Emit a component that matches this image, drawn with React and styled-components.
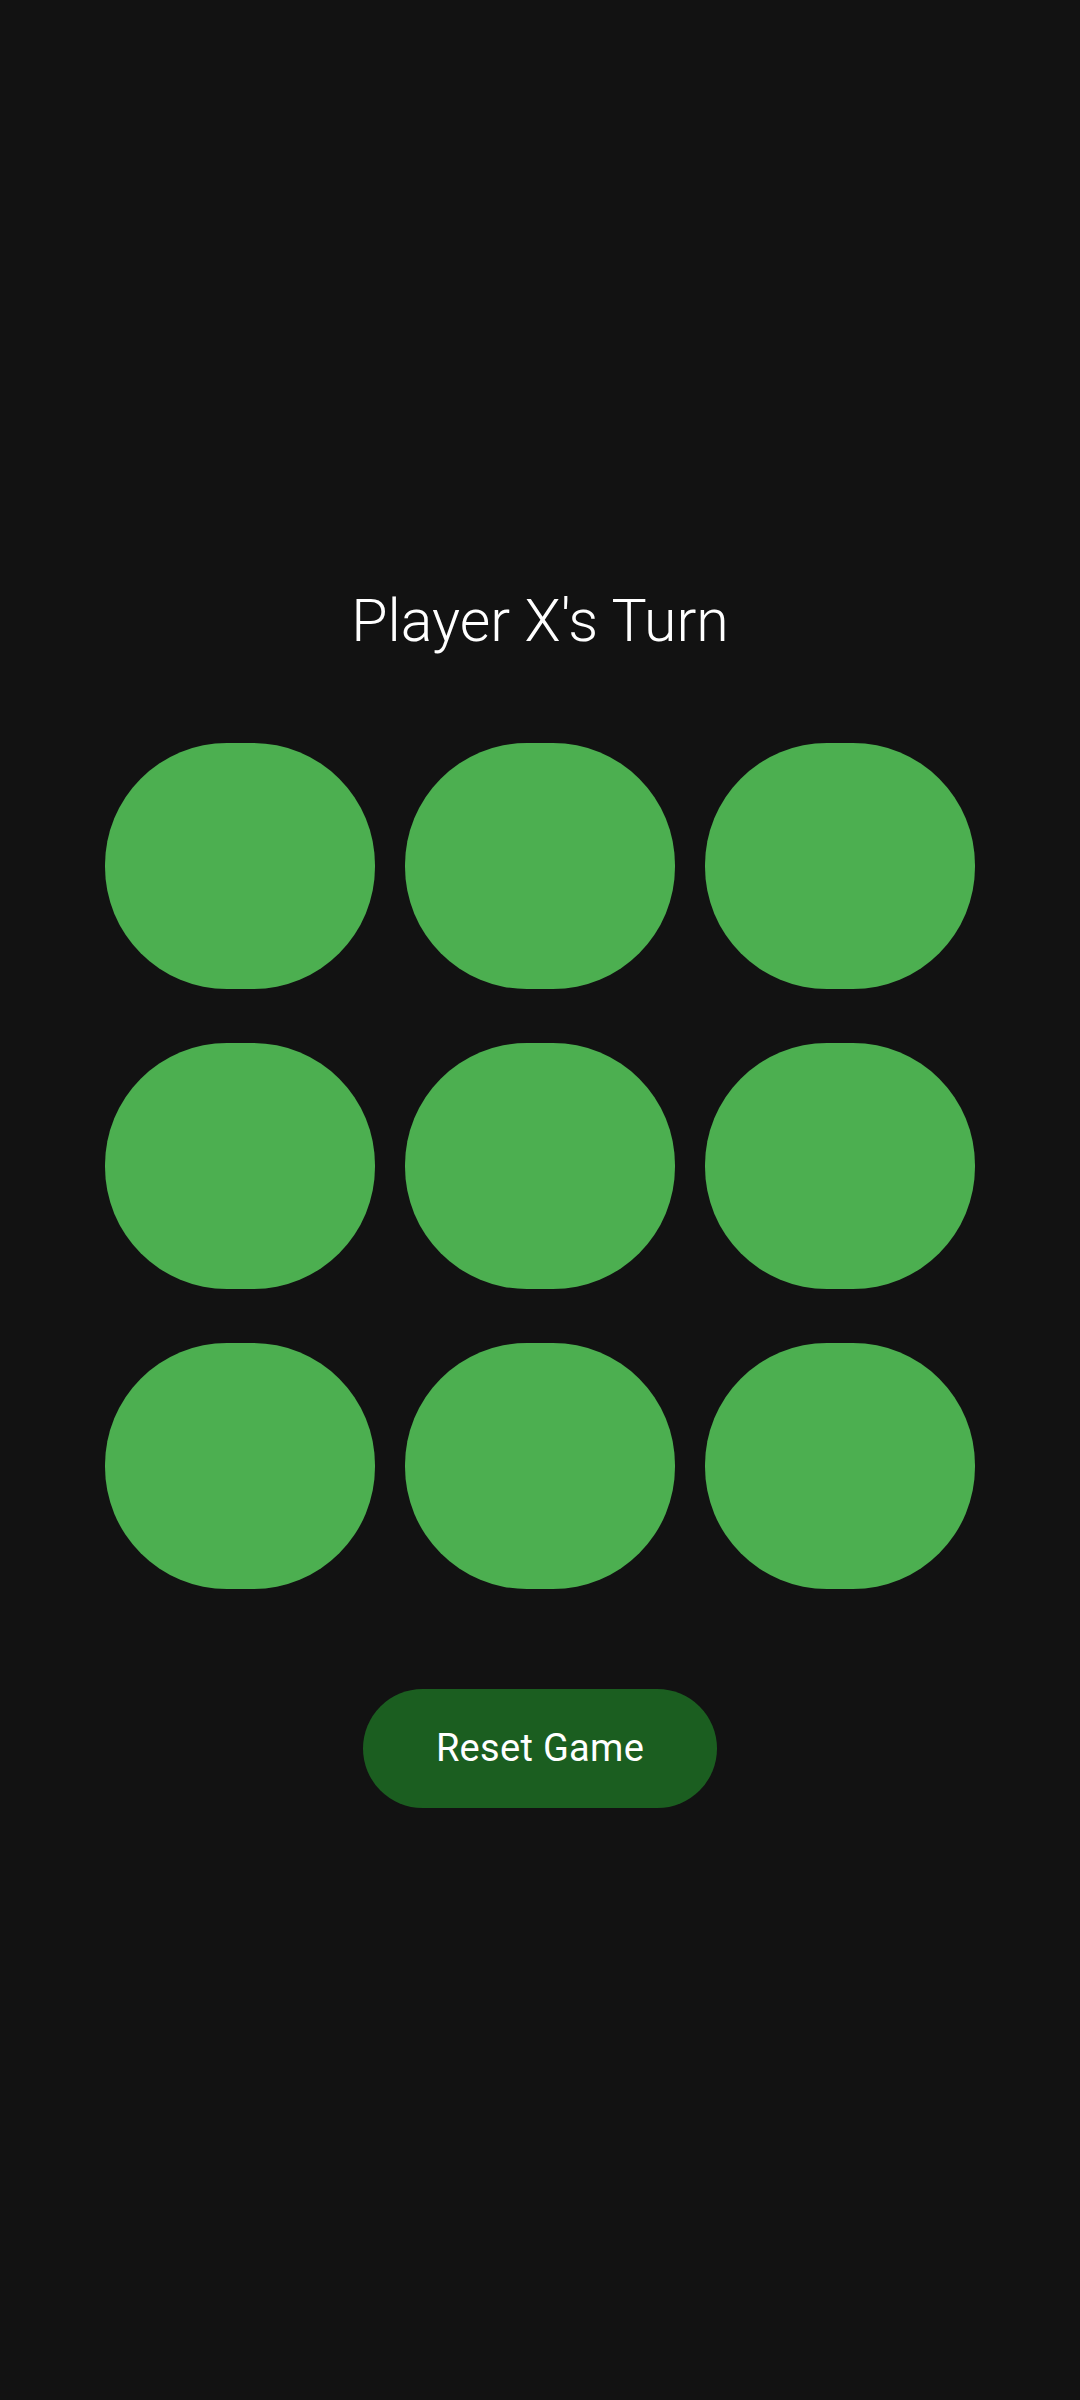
import React, { useState } from "react";
import styled, { createGlobalStyle } from "styled-components";

const GlobalStyle = createGlobalStyle`
  html, body {
    margin: 0;
    padding: 0;
    background: #121212;
  }
  body {
    font-family: Roboto, "Noto Sans", "Liberation Sans", sans-serif;
  }
`;

const Screen = styled.main`
  min-height: 100vh;
  box-sizing: border-box;
  padding-bottom: 6px;
  display: flex;
  flex-direction: column;
  align-items: center;
  justify-content: center;
  background: #121212;
`;

const Status = styled.h1`
  margin: 0 0 88px;
  font-family: Roboto, "Noto Sans", sans-serif;
  font-weight: 300;
  font-size: 59px;
  line-height: 68px;
  color: #ffffff;
  text-align: center;
`;

const Board = styled.div`
  display: grid;
  grid-template-columns: repeat(3, 270px);
  grid-auto-rows: 246px;
  column-gap: 30px;
  row-gap: 54px;
`;

const Cell = styled.button`
  border: none;
  padding: 0;
  margin: 0;
  background: #4caf50;
  border-radius: 122px;
  color: #ffffff;
  font-family: Roboto, "Noto Sans", sans-serif;
  font-size: 96px;
  font-weight: 400;
  cursor: pointer;
`;

const ResetButton = styled.button`
  margin-top: 100px;
  width: 354px;
  height: 119px;
  border: none;
  border-radius: 60px;
  background: #1b5e20;
  color: #ffffff;
  font-family: Roboto, "Noto Sans", sans-serif;
  font-weight: 400;
  font-size: 38px;
  letter-spacing: 0.3px;
  cursor: pointer;
`;

export default function App() {
  const [cells, setCells] = useState(Array(9).fill(""));
  const [player, setPlayer] = useState("X");

  const play = (i) => {
    if (cells[i]) return;
    const next = cells.slice();
    next[i] = player;
    setCells(next);
    setPlayer(player === "X" ? "O" : "X");
  };

  const reset = () => {
    setCells(Array(9).fill(""));
    setPlayer("X");
  };

  return (
    <>
      <GlobalStyle />
      <Screen>
        <Status>Player {player}'s Turn</Status>
        <Board>
          {cells.map((c, i) => (
            <Cell key={i} onClick={() => play(i)}>
              {c}
            </Cell>
          ))}
        </Board>
        <ResetButton onClick={reset}>Reset Game</ResetButton>
      </Screen>
    </>
  );
}
